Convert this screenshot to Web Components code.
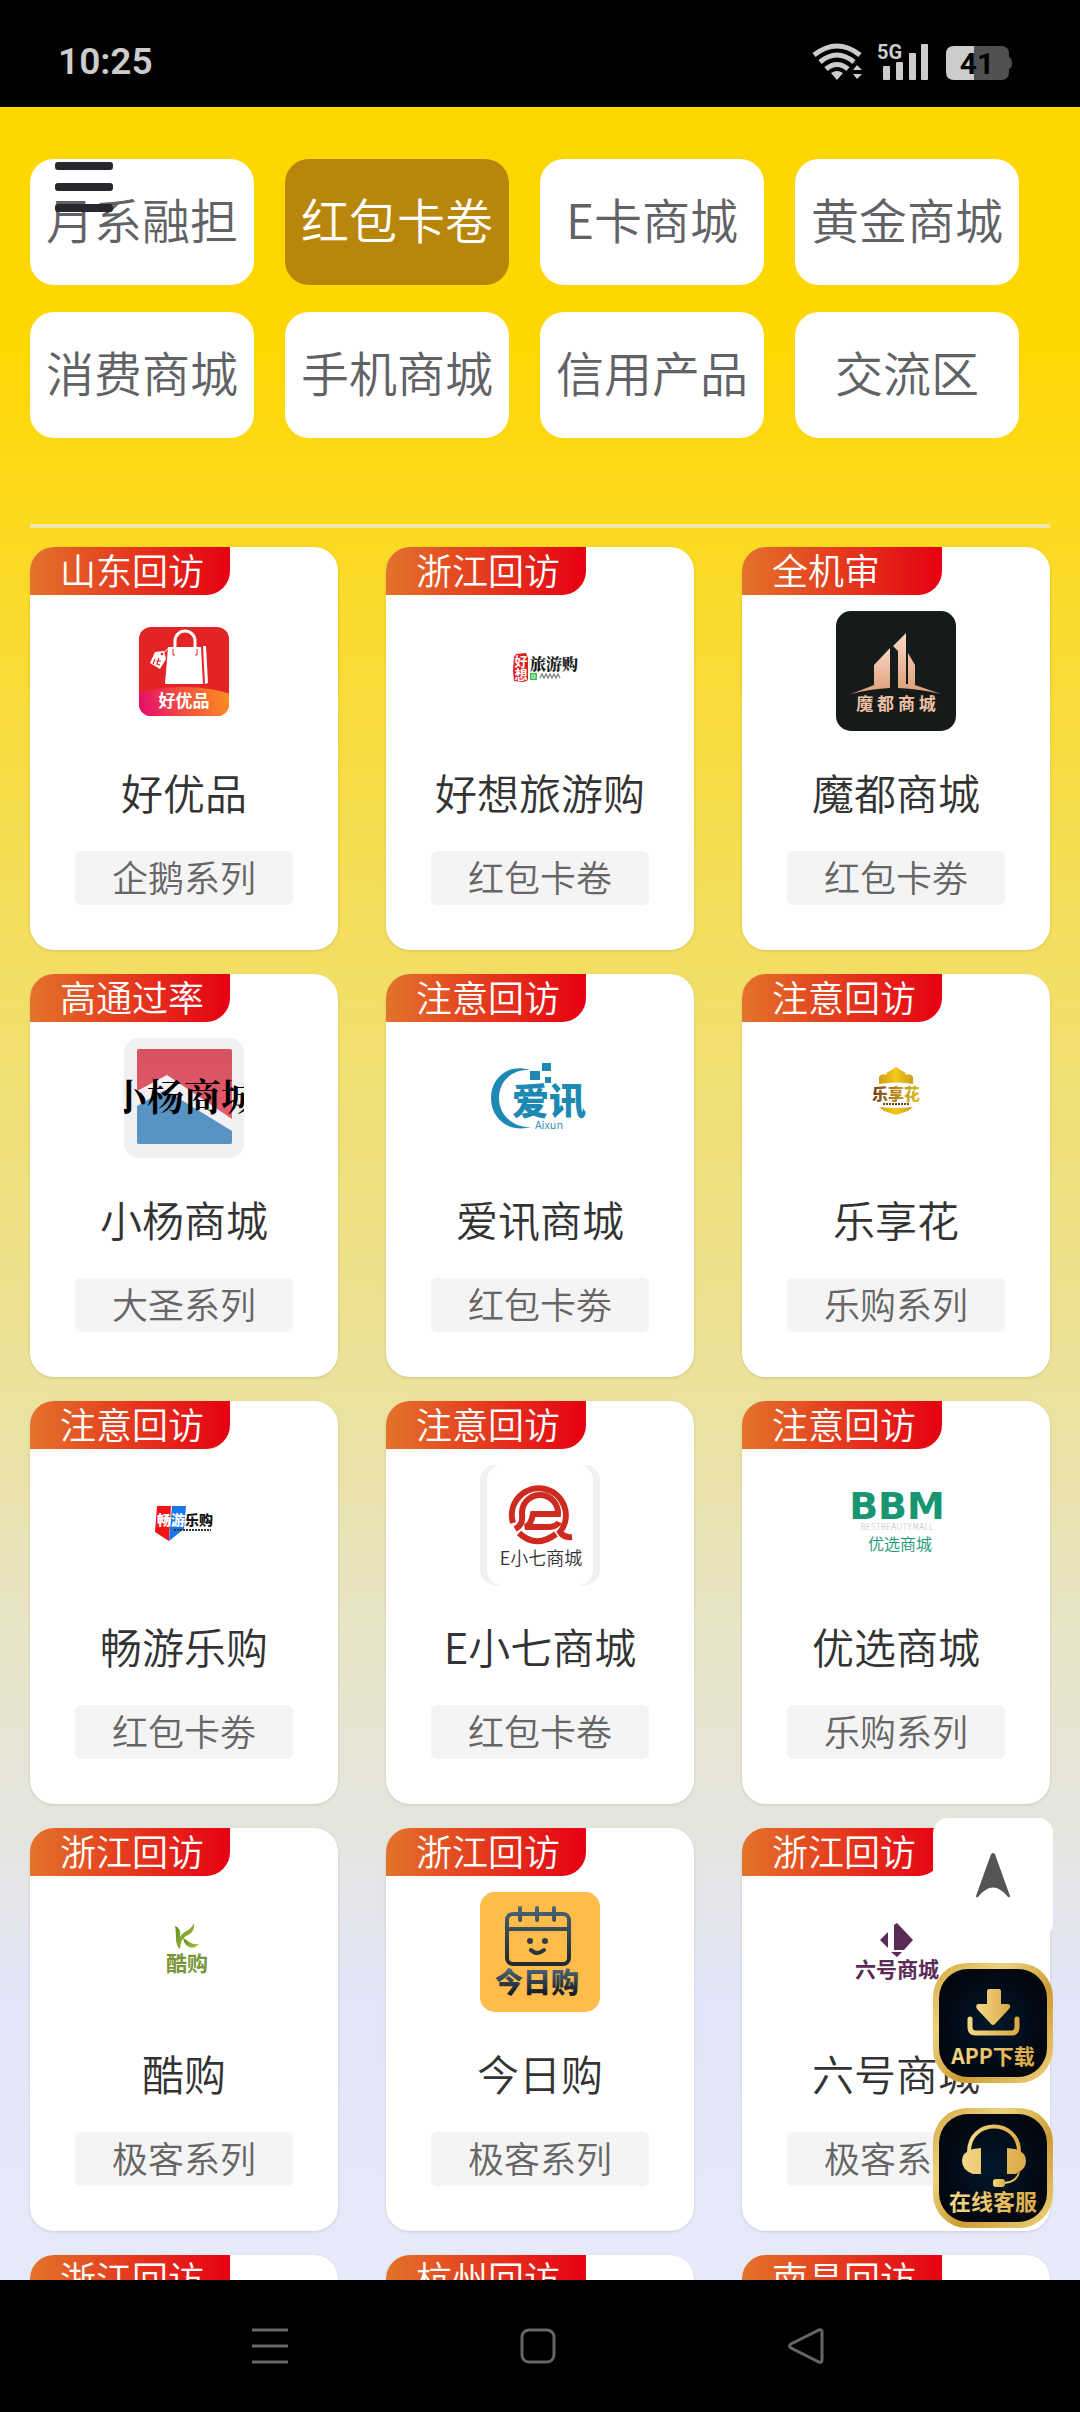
<!DOCTYPE html>
<html lang="zh-CN">
<head>
<meta charset="utf-8">
<meta name="viewport" content="width=device-width, initial-scale=1">
<title>红包卡卷</title>
<style>
  html, body { margin: 0; height: 100%; }
  body { font-family: "Noto Sans CJK SC", "Noto Sans", sans-serif; font-weight: 350; background: #000; }
  mall-card svg { display: block; width: 120px; height: 120px; }
  mall-card svg text { font-family: "Noto Sans CJK SC", sans-serif; }
</style>
</head>
<body>
<mall-app>
  <mall-tabs slot="tabs">
    <mall-tab>月系融担</mall-tab>
    <mall-tab active>红包卡卷</mall-tab>
    <mall-tab>E卡商城</mall-tab>
    <mall-tab>黄金商城</mall-tab>
    <mall-tab>消费商城</mall-tab>
    <mall-tab>手机商城</mall-tab>
    <mall-tab>信用产品</mall-tab>
    <mall-tab>交流区</mall-tab>
  </mall-tabs>

  <mall-card ribbon="山东回访" series="企鹅系列">好优品
    <svg slot="logo" viewBox="0 0 120 120">
      <defs>
        <linearGradient id="hy" gradientUnits="userSpaceOnUse" x1="20" y1="104" x2="100" y2="80"><stop offset="0" stop-color="#e5106a"/><stop offset=".5" stop-color="#f4513a"/><stop offset="1" stop-color="#fb8a22"/></linearGradient>
        <clipPath id="hyc"><rect x="15" y="16" width="90" height="89" rx="12"/></clipPath>
      </defs>
      <rect x="15" y="16" width="90" height="89" rx="12" fill="#e32426"/>
      <ellipse cx="60" cy="106" rx="72" ry="30" fill="url(#hy)" clip-path="url(#hyc)"/>
      <path d="M44 36H77L79 73H41Z" fill="#fff"/>
      <path d="M79 35L82 35L84 72L81 73Z" fill="#fff"/>
      <path d="M51 44V30a10 10 0 0 1 20 0V44" fill="none" stroke="#fff" stroke-width="3"/>
      <path d="M49 38v6h2M73 38v6h-2" stroke="#e32426" stroke-width="1" fill="none"/>
      <path d="M31 41L40 40L42 48L36 58L26 52Z" fill="#fff"/>
      <path d="M38 43L45 37" stroke="#fff" stroke-width="1"/>
      <circle cx="38" cy="43" r="1.3" fill="#e32426"/>
      <path d="M31 48l-2 5M35 47l-2 6 3 1M32 50l5 0" stroke="#e32426" stroke-width="1.2" fill="none"/>
      <text x="60" y="96" font-size="17" font-weight="700" fill="#fff" text-anchor="middle">好优品</text>
    </svg>
  </mall-card>

  <mall-card ribbon="浙江回访" series="红包卡卷">好想旅游购
    <svg slot="logo" viewBox="0 0 120 120">
      <path d="M36 43L46 42L48 47V69L44 71L34 70L33 60L34 46Z" fill="#df1f1f"/>
      <text x="41" y="55" font-size="13" font-weight="700" fill="#fff" text-anchor="middle">好</text>
      <text x="41" y="68" font-size="13" font-weight="700" fill="#fff" text-anchor="middle">想</text>
      <text x="50" y="59" font-size="16" font-weight="900" fill="#1b1b1b" style="font-family:'Noto Serif CJK SC','Noto Sans CJK SC',serif">旅游购</text>
      <rect x="50" y="62" width="7" height="7" fill="#3bbf50"/>
      <path d="M52 64h3v3h-3z" fill="none" stroke="#d9f5dc" stroke-width="1"/>
      <path d="M60 67l2-4 2 4 2-4 2 4 2-4 2 4 2-4 2 4 2-4 2 4" fill="none" stroke="#888" stroke-width="1.4"/>
    </svg>
  </mall-card>

  <mall-card ribbon="全机审" series="红包卡劵">魔都商城
    <svg slot="logo" viewBox="0 0 120 120">
      <defs><linearGradient id="md" x1="0" y1="0" x2="0" y2="1"><stop offset="0" stop-color="#fbd8c4"/><stop offset="1" stop-color="#dd9d76"/></linearGradient></defs>
      <rect width="120" height="120" rx="15" fill="#151b1b"/>
      <path d="M54 37L38 54V74L15 83Q34 78 54 77Z" fill="url(#md)"/>
      <path d="M70 22L57 35L62 40V77Q84 78 105 83L79 74V54L72 42V73H70Z" fill="url(#md)"/>
      <text x="60" y="99" font-size="17" font-weight="700" fill="#efc0a4" text-anchor="middle">魔 都 商 城</text>
    </svg>
  </mall-card>

  <mall-card ribbon="高通过率" series="大圣系列">小杨商城
    <svg slot="logo" viewBox="0 0 120 120">
      <defs>
        <linearGradient id="xy" x1="0" y1="0" x2="0" y2="1"><stop offset="0" stop-color="#d65162"/><stop offset="1" stop-color="#ea5f6d"/></linearGradient>
        <clipPath id="xyc"><rect width="120" height="120" rx="4"/></clipPath>
      </defs>
      <rect width="120" height="120" rx="15" fill="#f1f0f0"/>
      <rect x="13" y="11" width="95" height="95" rx="2" fill="url(#xy)"/>
      <path d="M13 53L43 37L108 81V104a2 2 0 0 1-2 2H15a2 2 0 0 1-2-2Z" fill="#f4f2f3"/>
      <path d="M13 68L41 52L108 93V104a2 2 0 0 1-2 2H15a2 2 0 0 1-2-2Z" fill="#5793c4"/>
      <g clip-path="url(#xyc)"><text x="60" y="73" font-size="37" font-weight="700" style="font-family:'Noto Serif CJK SC','Noto Sans CJK SC',serif" text-anchor="middle">小杨商城</text></g>
    </svg>
  </mall-card>

  <mall-card ribbon="注意回访" series="红包卡劵">爱讯商城
    <svg slot="logo" viewBox="0 0 120 120">
      <path d="M50 32C28 25 11 40 11 60C11 81 29 95 51 89C33 90 19 77 19 60C19 43 32 31 50 32Z" fill="#1d89b3"/>
      <path d="M50 33h10v9H50zM62 25h9v8h-9zM65 39h6v6h-6z" fill="#1d89b3"/>
      <text x="69" y="77" font-size="37" font-weight="900" fill="#1d89b3" text-anchor="middle">爱讯</text>
      <text x="69" y="91" font-size="11" fill="#1d89b3" text-anchor="middle">Aixun</text>
    </svg>
  </mall-card>

  <mall-card ribbon="注意回访" series="乐购系列">乐享花
    <svg slot="logo" viewBox="0 0 120 120">
      <defs><linearGradient id="lx"><stop offset="0" stop-color="#6e3c12"/><stop offset=".5" stop-color="#b98715"/><stop offset="1" stop-color="#dcc02a"/></linearGradient>
      <linearGradient id="lg"><stop offset="0" stop-color="#d29e18"/><stop offset=".5" stop-color="#f0ca1e"/><stop offset="1" stop-color="#c99c20"/></linearGradient></defs>
      <path d="M43 46V39Q45 35 50 37Q50 34 54 33L60 29L66 33Q70 34 70 37Q75 35 77 39V46Q60 43 43 46Z" fill="url(#lg)"/>
      <text x="60" y="62" font-size="16" font-weight="900" fill="url(#lx)" text-anchor="middle">乐享花</text>
      <path d="M47 66H73" stroke="#6b4a18" stroke-width="2" stroke-dasharray="2 1"/>
      <path d="M43 69Q60 71 77 69L72 73L60 77L48 73Z" fill="url(#lg)"/>
    </svg>
  </mall-card>

  <mall-card ribbon="注意回访" series="红包卡劵">畅游乐购
    <svg slot="logo" viewBox="0 0 120 120">
      <path d="M33 41H47L45 76L31 67Z" fill="#f01414"/>
      <path d="M48 41H62L60 64L45 76Z" fill="#1677f0"/>
      <text x="33" y="60" font-size="14" font-weight="900" fill="#fff">畅游<tspan fill="#161616">乐购</tspan></text>
      <path d="M50 65H87" stroke="#333" stroke-width="2" stroke-dasharray="2 1"/>
    </svg>
  </mall-card>

  <mall-card ribbon="注意回访" series="红包卡卷">E小七商城
    <svg slot="logo" viewBox="0 0 120 120">
      <rect width="120" height="120" rx="15" fill="#f1f1f1"/>
      <rect x="7" width="106" height="120" rx="15" fill="#fff"/>
      <g fill="none" stroke="#cf2a20" stroke-width="6">
        <path d="M33 58A27 27 0 1 1 80 67Q84 73 92 72"/>
        <path d="M35 64C44 59 42 53 42 47A18 18 0 0 1 78 49H53Q51 60 45 62H70Q77 61 79 57"/>
        <path d="M39 68Q56 84 76 69"/>
      </g>
      <text x="61" y="100" font-size="18" fill="#333" text-anchor="middle">E小七商城</text>
    </svg>
  </mall-card>

  <mall-card ribbon="注意回访" series="乐购系列">优选商城
    <svg slot="logo" viewBox="0 0 120 120">
      <text x="61" y="54" font-size="38" font-weight="700" fill="#189672" style="font-family:'DejaVu Sans',sans-serif" text-anchor="middle">BBM</text>
      <text x="61" y="65" font-size="8" fill="#a5b5af" style="font-family:'DejaVu Sans',sans-serif" text-anchor="middle">BESTBEAUTYMALL</text>
      <text x="64" y="85" font-size="16" fill="#189672" text-anchor="middle">优选商城</text>
    </svg>
  </mall-card>

  <mall-card ribbon="浙江回访" series="极客系列">酷购
    <svg slot="logo" viewBox="0 0 120 120">
      <defs><linearGradient id="kg" x1="0" y1="0" x2="1" y2="1"><stop offset="0" stop-color="#5f8a1e"/><stop offset="1" stop-color="#a9c83f"/></linearGradient></defs>
      <path d="M51 34C56 36 57 40 56 45C60 38 66 40 70 31C71 39 67 42 62 44C57 47 57 51 56 57C50 53 53 42 51 34Z" fill="url(#kg)"/>
      <path d="M59 46C64 48 66 53 75 52C70 58 61 57 59 46Z" fill="url(#kg)"/>
      <text x="63" y="79" font-size="21" font-weight="700" fill="#789637" text-anchor="middle">酷购</text>
    </svg>
  </mall-card>

  <mall-card ribbon="浙江回访" series="极客系列">今日购
    <svg slot="logo" viewBox="0 0 120 120">
      <defs><linearGradient id="jr" gradientUnits="userSpaceOnUse" x1="0" y1="14" x2="0" y2="74"><stop offset="0" stop-color="#4b6475"/><stop offset="1" stop-color="#20262c"/></linearGradient>
      <linearGradient id="jt" x1="0" y1="0" x2="0" y2="1"><stop offset=".2" stop-color="#4b6475"/><stop offset=".8" stop-color="#171f29"/></linearGradient></defs>
      <rect width="120" height="120" rx="15" fill="#ffbc4b"/>
      <g fill="none" stroke="url(#jr)" stroke-width="4" stroke-linecap="round">
        <rect x="27" y="22" width="62" height="50" rx="6"/>
        <path d="M28 37L88 37.1M40 16L40.1 28M57 16L57.1 28M74 16L74.1 28M51 58Q57 64 64 58"/>
      </g>
      <circle cx="50" cy="49" r="3" fill="#333c44"/><circle cx="65" cy="49" r="3" fill="#333c44"/>
      <text x="57" y="101" font-size="28" font-weight="900" fill="url(#jt)" text-anchor="middle">今日购</text>
    </svg>
  </mall-card>

  <mall-card ribbon="浙江回访" series="极客系列">六号商城
    <svg slot="logo" viewBox="0 0 120 120">
      <path d="M44 48L52 40V56ZM58 33L61 31L77 48L68 58H58ZM55 60H66L61 65Z" fill="#5c2a56"/>
      <text x="61" y="85" font-size="21" font-weight="700" fill="#5c2a56" text-anchor="middle">六号商城</text>
    </svg>
  </mall-card>

  <mall-card ribbon="浙江回访"></mall-card>
  <mall-card ribbon="杭州回访"></mall-card>
  <mall-card ribbon="南昌回访"></mall-card>
</mall-app>

<script>
const define = (name, html, setup) => {
  const template = document.createElement('template');
  template.innerHTML = html;
  customElements.define(name, class extends HTMLElement {
    constructor() {
      super();
      this.attachShadow({ mode: 'open' }).append(template.content.cloneNode(true));
    }
    connectedCallback() {
      if (setup) setup(this, this.shadowRoot);
    }
  });
};

define('status-bar', `
  <style>
    :host { display: flex; align-items: center; justify-content: space-between; box-sizing: border-box;
      flex: none; height: 107px; padding: 16px 68px 0 58px; background: #000; color: #ccc; }
    time { font: 600 37px/44px Roboto, sans-serif; }
    .icons { display: flex; align-items: center; gap: 16px; }
    svg { display: block; }
    text { font-family: Roboto, sans-serif; font-weight: 700; }
  </style>
  <time>10:25</time>
  <div class="icons">
    <svg width="50" height="40" viewBox="0 0 50 40" fill="none" stroke="#ccc" stroke-width="5">
      <path d="M2 13Q25 -5 48 13M8 20Q25 6 42 20M14 27Q25 18 36 27"/>
      <path d="M19 31Q25 27 31 31L25 38ZM41 28L45 23L50 28ZM41 32L45 37L50 32Z" fill="#ccc" stroke="none"/>
    </svg>
    <svg width="52" height="40" viewBox="0 0 52 40" fill="#ccc">
      <text x="-1" y="17" font-size="20">5G</text>
      <rect x="5" y="24" width="7" height="14" rx="1"/><rect x="18" y="20" width="7" height="18" rx="1"/>
      <rect x="31" y="11" width="7" height="27" rx="1"/><rect x="43" y="2" width="7" height="36" rx="1"/>
    </svg>
    <svg width="66" height="40" viewBox="0 0 66 40">
      <path d="M8 4H28V38H8Q0 38 0 30V12Q0 4 8 4Z" fill="#ccc"/>
      <path d="M28 4H55Q63 4 63 12V15Q66 16 66 21T63 27V30Q63 38 55 38H28Z" fill="#505050"/>
      <text x="31" y="32" font-size="30" text-anchor="middle" fill="#000">41</text>
    </svg>
  </div>`);

define('nav-bar', `
  <style>
    :host { display: grid; grid-template-columns: repeat(3, 1fr); flex: none; height: 132px;
      box-sizing: border-box; padding: 0 140px 0 136px; background: #000; }
    button { border: 0; padding: 0; background: none; display: grid; place-items: center; }
    svg { display: block; width: 36px; height: 38px; fill: none; stroke: #666; stroke-width: 3; }
  </style>
  <button aria-label="最近任务"><svg viewBox="0 0 36 38"><path d="M0 3H36M0 19H36M0 35H36"/></svg></button>
  <button aria-label="主屏幕"><svg viewBox="0 0 36 38"><rect x="2" y="3" width="32" height="32" rx="7"/></svg></button>
  <button aria-label="返回"><svg viewBox="0 0 36 38"><path d="M31 3Q34 2 34 5V33Q34 36 31 35L3 21Q0 19 3 17Z"/></svg></button>`);

define('menu-button', `
  <style>
    :host { display: block; }
    button { display: flex; flex-direction: column; gap: 13px; width: 58px; border: 0; padding: 0; background: none; }
    i { display: block; width: 100%; height: 8px; border-radius: 3px; background: #26282d; }
  </style>
  <button aria-label="菜单"><i></i><i></i><i></i></button>`);

define('mall-tabs', `
  <style>
    :host { display: grid; grid-template-columns: repeat(4, 1fr); gap: 27px 31px; padding-right: 31px; }
  </style>
  <slot></slot>`);

define('mall-tab', `
  <style>
    :host { display: block; }
    button { display: block; width: 100%; height: 126px; border: 0; padding: 0 0 8px; border-radius: 24px;
      background: #fff; color: #606266; font: inherit; font-size: 48px; line-height: 72px; white-space: nowrap; }
    :host([active]) button { background: #b8860b; color: #fff; }
  </style>
  <button><slot></slot></button>`);

define('mall-card', `
  <style>
    :host { display: block; }
    a { display: flex; flex-direction: column; align-items: center; box-sizing: border-box; height: 403px;
      border-radius: 24px; background: #fff; box-shadow: 0 1px 3px rgba(0, 0, 0, .12);
      text-decoration: none; }
    .ribbon { align-self: flex-start; box-sizing: border-box; width: 200px; height: 48px; padding-left: 30px;
      border-radius: 24px 0; background: linear-gradient(90deg, #e3732a, #e60012);
      color: #fff; font-size: 36px; line-height: 44px; white-space: nowrap; }
    .logo { width: 120px; height: 120px; margin-top: 16px; }
    h2 { margin: 30px 0 0; color: #333; font-size: 42px; font-weight: inherit; line-height: 62px; white-space: nowrap; }
    .series { align-self: stretch; margin: 28px 45px 0; height: 54px; border-radius: 6px;
      background: #f4f4f4; color: #666; font-size: 36px; line-height: 50px; text-align: center; }
    :host(:not([series])) .series { visibility: hidden; }
  </style>
  <a href="#">
    <div class="ribbon"></div>
    <div class="logo"><slot name="logo"></slot></div>
    <h2><slot></slot></h2>
    <div class="series"></div>
  </a>`, (host, root) => {
    root.querySelector('.ribbon').textContent = host.getAttribute('ribbon');
    root.querySelector('.series').textContent = host.getAttribute('series') || '';
  });

define('float-tools', `
  <style>
    :host { display: flex; flex-direction: column; gap: 25px; }
    button { display: block; width: 120px; height: 120px; border: 0; padding: 0; background: none; }
    .top { border-radius: 15px; background: #fff; }
    svg { display: block; width: 120px; height: 120px; }
    text { font-family: "Noto Sans CJK SC", sans-serif; font-weight: 700; }
  </style>
  <button class="top" aria-label="回到顶部"><svg viewBox="0 0 120 120"><path d="M60 35Q62 35 63 39L77 78Q77 80 75 79Q60 60 45 79Q43 80 43 78L57 39Q58 35 60 35Z" fill="#555"/></svg></button>
  <button><svg viewBox="0 0 120 120">
    <defs>
      <linearGradient id="g" x1="0" y1="0" x2="1" y2="1"><stop offset="0" stop-color="#d7a944"/><stop offset=".3" stop-color="#ecd27c"/><stop offset=".6" stop-color="#cd9c36"/><stop offset="1" stop-color="#efd37b"/></linearGradient>
      <linearGradient id="t"><stop offset="0" stop-color="#f4d886"/><stop offset="1" stop-color="#dbaa45"/></linearGradient>
      <radialGradient id="b"><stop offset="0" stop-color="#02182a"/><stop offset="1" stop-color="#020710"/></radialGradient>
    </defs>
    <rect width="120" height="120" rx="34" fill="url(#g)"/><rect x="6" y="6" width="108" height="108" rx="29" fill="url(#b)"/>
    <path d="M56 26H66Q68 26 68 28V41H75Q79 42 76 46L62 61Q60 63 58 61L44 46Q42 42 45 41H54V28Q54 26 56 26Z" fill="url(#t)"/>
    <path d="M37 56V64Q37 70 43 70H78Q84 70 84 64V56" fill="none" stroke="url(#t)" stroke-width="5" stroke-linecap="round"/>
    <text x="60" y="101" font-size="21" fill="url(#t)" text-anchor="middle">APP下载</text>
  </svg></button>
  <button><svg viewBox="0 0 120 120">
    <rect width="120" height="120" rx="34" fill="url(#g)"/><rect x="6" y="6" width="108" height="108" rx="29" fill="url(#b)"/>
    <path d="M36 44C36 10 86 10 86 44" fill="none" stroke="url(#t)" stroke-width="4"/>
    <path d="M48 40V66H40Q29 62 29 53T40 41ZM74 40V66H82Q93 62 93 53T82 41Z" fill="url(#t)"/>
    <path d="M86 64Q84 74 71 75" fill="none" stroke="url(#t)" stroke-width="2"/>
    <rect x="60" y="71" width="12" height="8" rx="3" fill="url(#t)"/>
    <text x="60" y="102" font-size="22" fill="url(#t)" text-anchor="middle">在线客服</text>
  </svg></button>`);

define('mall-app', `
  <style>
    :host { display: flex; flex-direction: column; height: 100vh; }
    main { position: relative; flex: 1; min-height: 0; overflow: hidden; padding: 52px 30px 0;
      background: linear-gradient(180deg, #ffd700 0%, #ffd700 10%, #fbda22 20%, #f3de62 39%, #ebe29c 59%, #e8e4c6 70%, #e5e5de 79%, #e3e5f8 87%, #e7eaf8 100%); }
    hr { height: 4px; margin: 86px 0 19px; border: 0; background: #eee5a8; }
    .cards { display: grid; grid-template-columns: repeat(3, 1fr); gap: 24px 48px; }
    menu-button { position: absolute; left: 55px; top: 55px; }
    float-tools { position: absolute; right: 27px; bottom: 52px; }
  </style>
  <status-bar></status-bar>
  <main>
    <slot name="tabs"></slot>
    <hr>
    <section class="cards"><slot></slot></section>
    <menu-button></menu-button>
    <float-tools></float-tools>
  </main>
  <nav-bar></nav-bar>`);
</script>
</body>
</html>
